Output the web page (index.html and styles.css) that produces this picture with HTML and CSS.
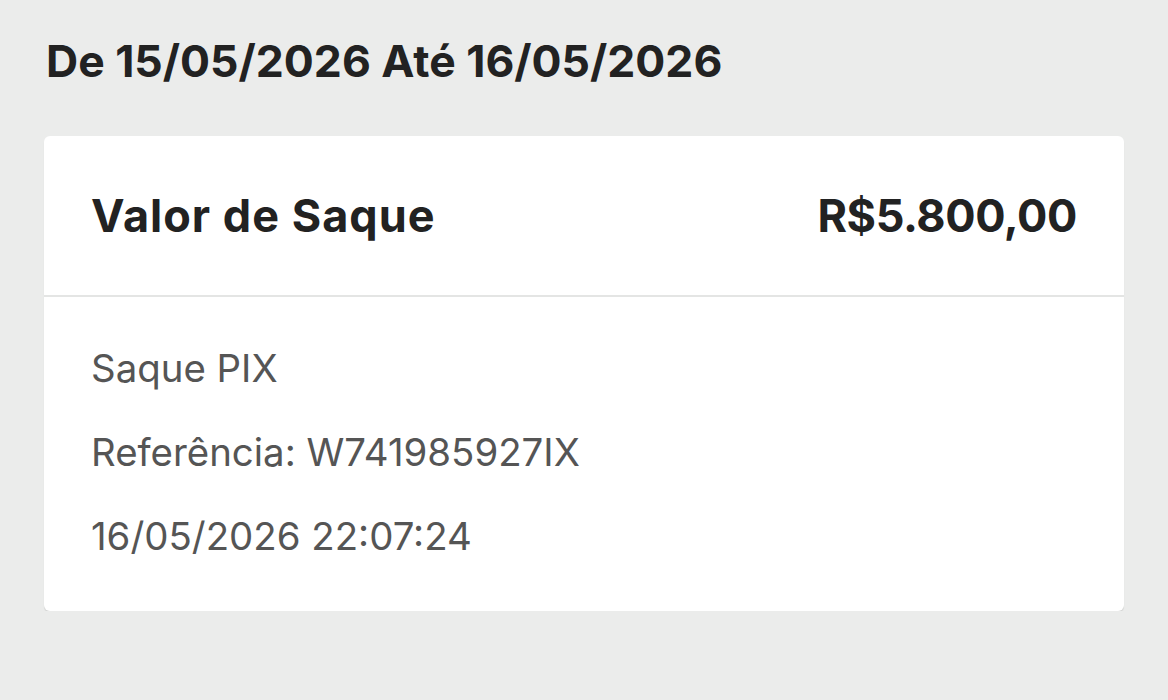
FILE: index.html
```html
<!DOCTYPE html>
<html lang="pt-BR">

<head>
    <meta charset="UTF-8">
    <meta name="viewport" content="width=device-width, initial-scale=1.0">
    <title>Saques</title>
    <link rel="stylesheet" href="styles.css">
</head>

<body>
    <h1 class="period">De 15/05/2026 Até 16/05/2026</h1>

    <div class="card">
        <div class="card-head">
            <span class="label">Valor de Saque</span>
            <span class="amount">R$5.800,00</span>
        </div>
        <div class="card-body">
            <p>Saque PIX</p>
            <p>Referência: W741985927IX</p>
            <p>16/05/2026 22:07:24</p>
        </div>
    </div>
</body>

</html>
```

FILE: styles.css
```css
body {
    margin: 0;
    background-color: #ebeceb;
    font-family: Inter, "Noto Sans", sans-serif;
    color: #222;
    overflow: hidden;
}

.period {
    margin: 0;
    padding: 36px 46px 0;
    font-size: 44.5px;
    font-weight: 700;
    line-height: 50px;
}

.card {
    margin: 50px 44px 0;
    background-color: #fff;
    border-radius: 6px;
    box-shadow: 0 2px 1px rgba(0, 0, 0, 0.09);
}

.card-head {
    display: flex;
    justify-content: space-between;
    align-items: center;
    height: 159px;
    padding: 0 47px;
    border-bottom: 2px solid #e4e5e4;
}

.label,
.amount {
    font-size: 45px;
    font-weight: 700;
}

.label {
    letter-spacing: 1px;
}

.amount {
    letter-spacing: -0.4px;
}

.card-body {
    padding: 29px 47px 33px;
}

.card-body p {
    margin: 0;
    font-size: 38.4px;
    line-height: 84px;
    color: #555;
}
```
